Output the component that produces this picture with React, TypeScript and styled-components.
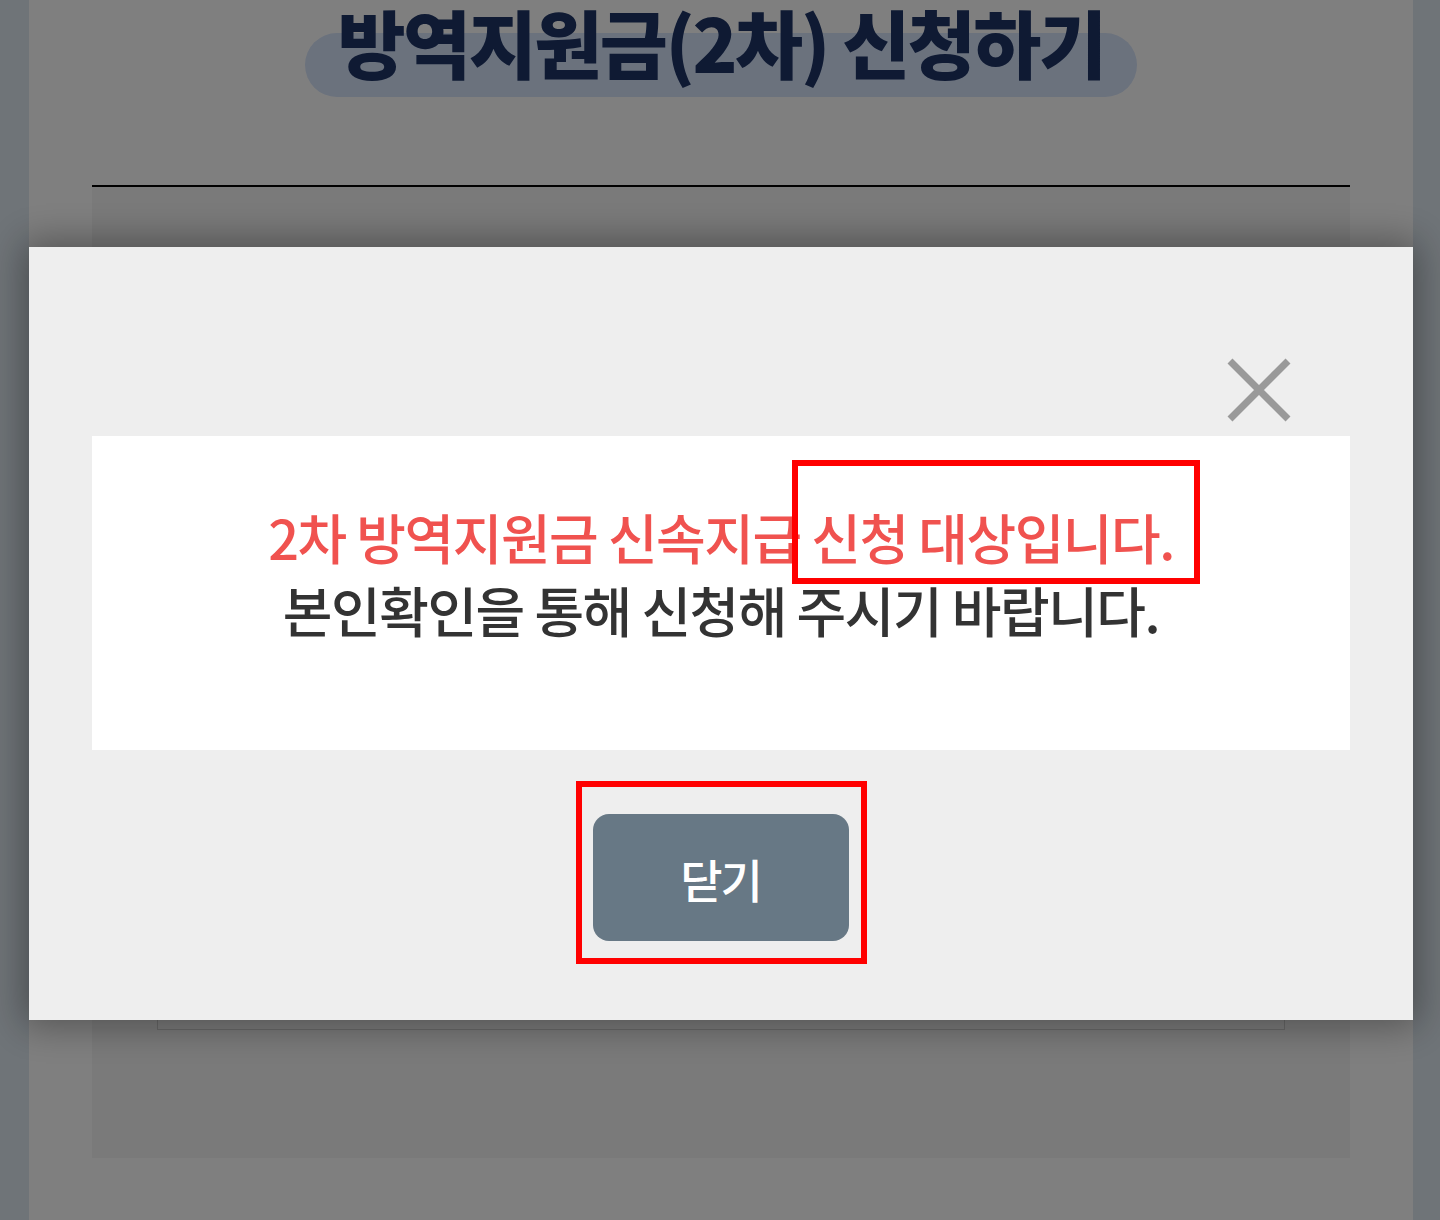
import React from 'react';
import styled, { createGlobalStyle } from 'styled-components';

const GlobalStyle = createGlobalStyle`
  html,
  body {
    margin: 0;
    padding: 0;
  }

  body {
    min-height: 1220px;
    background: #dfe9f1;
    font-family: 'Noto Sans CJK KR', 'Noto Sans', sans-serif;
    overflow: hidden;
  }

  * {
    box-sizing: border-box;
  }
`;

const Page = styled.div`
  width: 1384px;
  min-height: 1220px;
  margin-left: 29px;
  padding: 0 63px;
  background: #fff;
  display: flex;
  flex-direction: column;
`;

const TitleArea = styled.header`
  height: 185px;
  display: flex;
  justify-content: center;
  align-items: flex-start;
`;

const Title = styled.h1`
  position: relative;
  z-index: 0;
  margin: 0;
  padding-top: 2px;
  font-size: 74px;
  line-height: 78px;
  font-weight: 900;
  letter-spacing: -2.5px;
  color: #1e3466;
  white-space: nowrap;

  &::before {
    content: '';
    position: absolute;
    z-index: -1;
    left: -32px;
    right: -32px;
    top: 33px;
    height: 64px;
    border-radius: 32px;
    background: #d6e4fb;
  }
`;

const FormBox = styled.section`
  height: 973px;
  border-top: 2px solid #000;
  background: #f4f4f4;
  padding: 60px 65px 0;
`;

const FormCard = styled.div`
  height: 783px;
  border: 1px solid #cfcfcf;
  border-top: none;
  background: #f5f5f5;
`;

const Overlay = styled.div`
  position: fixed;
  inset: 0;
  background: rgba(0, 0, 0, 0.5);
`;

const Modal = styled.div`
  position: fixed;
  top: 247px;
  left: 29px;
  width: 1384px;
  height: 773px;
  padding: 0 63px;
  background: #eeeeee;
  box-shadow: 0 0 36px 6px rgba(0, 0, 0, 0.35);
  display: flex;
  flex-direction: column;
`;

const ModalHeader = styled.div`
  height: 189px;
  display: flex;
  justify-content: flex-end;
  align-items: flex-end;
  padding: 0 59px 14px 0;
`;

const CloseIcon = styled.button`
  width: 64px;
  height: 64px;
  padding: 0;
  border: none;
  background: none;
  display: block;

  svg {
    display: block;
  }
`;

const MessageBox = styled.div`
  position: relative;
  height: 314px;
  padding-top: 64px;
  background: #fff;
  text-align: center;
`;

const MessageLine = styled.p<{ $accent?: boolean }>`
  margin: 0;
  font-size: 54px;
  line-height: 73px;
  font-weight: 500;
  letter-spacing: -1.5px;
  color: ${(p) => (p.$accent ? '#f0524f' : '#333333')};
  white-space: nowrap;
`;

const Highlight = styled.div`
  position: absolute;
  left: 700px;
  top: 24px;
  width: 408px;
  height: 124px;
  border: 6px solid #ff0000;
  pointer-events: none;
`;

const ButtonRow = styled.div`
  margin-top: 31px;
  display: flex;
  justify-content: center;
`;

const MarkedArea = styled.div`
  border: 6px solid #ff0000;
  padding: 27px 12px 17px 11px;
`;

const CloseButton = styled.button`
  display: block;
  width: 256px;
  height: 127px;
  border: none;
  border-radius: 16px;
  background: #677885;
  color: #fff;
  font-family: 'Noto Sans CJK KR', 'Noto Sans', sans-serif;
  font-size: 46px;
  font-weight: 500;
  letter-spacing: -2px;
`;

export default function App() {
  return (
    <>
      <GlobalStyle />
      <Page>
        <TitleArea>
          <Title>방역지원금(2차) 신청하기</Title>
        </TitleArea>
        <FormBox>
          <FormCard />
        </FormBox>
      </Page>
      <Overlay />
      <Modal>
        <ModalHeader>
          <CloseIcon aria-label="닫기">
            <svg width="64" height="64" viewBox="0 0 64 64">
              <path d="M3 3 L61 61 M61 3 L3 61" stroke="#999999" strokeWidth="7" fill="none" />
            </svg>
          </CloseIcon>
        </ModalHeader>
        <MessageBox>
          <Highlight />
          <MessageLine $accent>2차 방역지원금 신속지급 신청 대상입니다.</MessageLine>
          <MessageLine>본인확인을 통해 신청해 주시기 바랍니다.</MessageLine>
        </MessageBox>
        <ButtonRow>
          <MarkedArea>
            <CloseButton>닫기</CloseButton>
          </MarkedArea>
        </ButtonRow>
      </Modal>
    </>
  );
}
